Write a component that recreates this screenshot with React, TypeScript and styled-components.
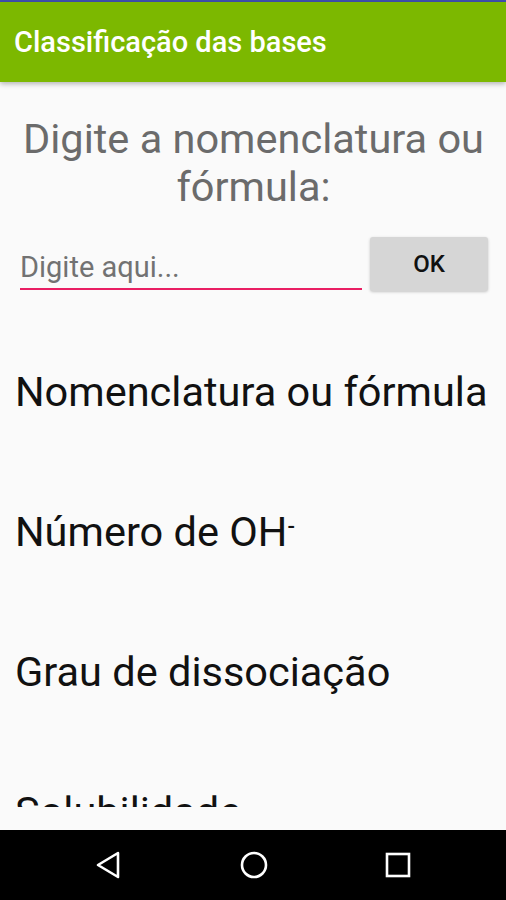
import React from "react";
import styled, { createGlobalStyle } from "styled-components";

const Global = createGlobalStyle`
  html, body { margin: 0; padding: 0; background: #fafafa; }
  body { font-family: Roboto, "Noto Sans", Arial, sans-serif; }
  * { box-sizing: border-box; }
`;

const Screen = styled.div`
  width: 506px;
  height: 900px;
  display: flex;
  flex-direction: column;
  background: #fafafa;
  overflow: hidden;
`;

const StatusStrip = styled.div`
  height: 2px;
  background: #3f4fb0;
  flex: none;
`;

const AppBar = styled.header`
  height: 80px;
  flex: none;
  background: #7cb800;
  display: flex;
  align-items: center;
  padding-left: 14px;
  box-shadow: 0 2px 5px rgba(0, 0, 0, 0.28);
  position: relative;
  z-index: 1;
`;

const Title = styled.h1`
  margin: 0;
  font-family: Roboto, sans-serif;
  font-weight: 500;
  font-size: 29px;
  color: #ffffff;
  letter-spacing: 0;
`;

const Content = styled.main`
  flex: 1;
  overflow: hidden;
  display: flex;
  flex-direction: column;
  padding: 0 14px 23px 15px;
`;

const Prompt = styled.p`
  margin: 33px 0 0;
  font-family: Roboto, sans-serif;
  font-size: 41.5px;
  line-height: 48px;
  color: #6b6b6b;
  text-align: center;
`;

const InputRow = styled.div`
  display: flex;
  align-items: flex-start;
  gap: 8px;
  margin-top: 27px;
  padding: 0 4px 0 5px;
`;

const TextField = styled.div`
  flex: 1;
  height: 52px;
  border-bottom: 2px solid #e91e63;
  display: flex;
  align-items: center;
  padding-top: 8px;
  font-family: Roboto, sans-serif;
  font-size: 29px;
  color: #727272;
`;

const OkButton = styled.button`
  width: 118px;
  height: 54px;
  margin-top: -1px;
  border: none;
  border-radius: 3px;
  background: #d6d6d6;
  box-shadow: 0 1px 3px rgba(0, 0, 0, 0.22);
  font-family: Roboto, sans-serif;
  font-weight: 500;
  font-size: 24px;
  color: #111;
`;

const List = styled.div`
  flex: 1;
  overflow: hidden;
  display: flex;
  flex-direction: column;
`;

const Item = styled.div<{ $top: number }>`
  font-family: Roboto, sans-serif;
  font-size: 41.5px;
  line-height: 48px;
  color: #111;
  margin-top: ${(p) => p.$top}px;
  white-space: nowrap;
  flex: none;
`;

const Sup = styled.sup`
  font-size: 22px;
  font-weight: 500;
  vertical-align: 12px;
  line-height: 0;
`;

const NavBar = styled.nav`
  height: 70px;
  flex: none;
  background: #000;
  display: flex;
  align-items: center;
  justify-content: space-between;
  padding: 0 94px 0 95px;
`;

const NavIcon = styled.svg`
  width: 28px;
  height: 28px;
  display: block;
`;

export default function App() {
  return (
    <>
      <Global />
      <Screen>
        <StatusStrip />
        <AppBar>
          <Title>Classificação das bases</Title>
        </AppBar>
        <Content>
          <Prompt>Digite a nomenclatura ou fórmula:</Prompt>
          <InputRow>
            <TextField>Digite aqui...</TextField>
            <OkButton>OK</OkButton>
          </InputRow>
          <List>
            <Item $top={77}>Nomenclatura ou fórmula</Item>
            <Item $top={92}>
              Número de OH<Sup>-</Sup>
            </Item>
            <Item $top={92}>Grau de dissociação</Item>
            <Item $top={92}>Solubilidade</Item>
          </List>
        </Content>
        <NavBar>
          <NavIcon viewBox="0 0 28 28">
            <path d="M23 2 L3 14 L23 26 Z" fill="none" stroke="#fff" strokeWidth="2.6" strokeLinejoin="round" />
          </NavIcon>
          <NavIcon viewBox="0 0 28 28">
            <circle cx="14" cy="14" r="12" fill="none" stroke="#fff" strokeWidth="2.6" />
          </NavIcon>
          <NavIcon viewBox="0 0 28 28">
            <rect x="3" y="3" width="22" height="22" fill="none" stroke="#fff" strokeWidth="2.6" />
          </NavIcon>
        </NavBar>
      </Screen>
    </>
  );
}
